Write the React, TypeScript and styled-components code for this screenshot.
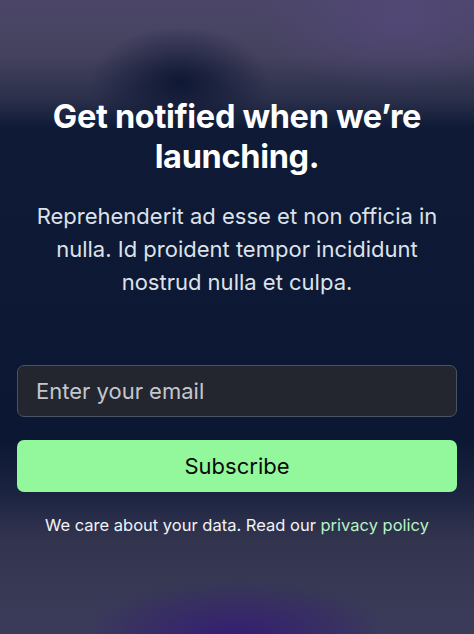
import styled, { createGlobalStyle } from "styled-components";

const GlobalStyle = createGlobalStyle`
  html, body {
    margin: 0;
    padding: 0;
    background: #0d1a35;
  }
  * {
    box-sizing: border-box;
  }
`;

const Page = styled.div`
  width: 474px;
  height: 634px;
  overflow: hidden;
  font-family: Inter, "Noto Sans", sans-serif;
  background:
    radial-gradient(ellipse 90px 55px at 180px 82px, rgba(10, 20, 48, 0.9), rgba(10, 20, 48, 0) 100%),
    radial-gradient(ellipse 140px 70px at 400px 20px, rgba(88, 74, 130, 0.6), rgba(88, 74, 130, 0) 100%),
    radial-gradient(ellipse 160px 60px at 237px 640px, rgba(52, 24, 120, 0.9), rgba(52, 24, 120, 0) 100%),
    linear-gradient(
      to bottom,
      #4b4668 0px,
      #45425f 55px,
      #2a2f4a 100px,
      #0e1a36 128px,
      #0c1833 440px,
      #1c2442 495px,
      #33354f 540px,
      #3b3c5a 634px
    );
  display: flex;
  flex-direction: column;
  align-items: center;
  padding: 97px 17px 0;
`;

const Heading = styled.h1`
  margin: 0;
  color: #ffffff;
  font-size: 32.5px;
  font-weight: 700;
  line-height: 40px;
  letter-spacing: -0.01em;
  text-align: center;
`;

const Lead = styled.p`
  margin: 23px 0 0;
  max-width: 410px;
  color: #dde2ea;
  font-size: 22px;
  line-height: 33px;
  text-align: center;
`;

const Form = styled.form`
  width: 100%;
  margin-top: 66px;
  display: flex;
  flex-direction: column;
  gap: 23px;
`;

const EmailInput = styled.input`
  width: 100%;
  height: 52px;
  padding: 0 18px;
  border: 1px solid #4c5263;
  border-radius: 7px;
  background: #23262f;
  color: #ffffff;
  font-family: inherit;
  font-size: 22px;
  outline: none;
  &::placeholder {
    color: #c4c7d0;
  }
`;

const SubscribeButton = styled.button`
  width: 100%;
  height: 52px;
  border: none;
  border-radius: 7px;
  background: #93f89c;
  color: #0a0a0a;
  font-family: inherit;
  font-size: 22px;
  cursor: pointer;
`;

const Note = styled.p`
  margin: 21px 0 0;
  color: #f1f3f7;
  font-size: 16.5px;
  line-height: 24px;
  text-align: center;
`;

const PolicyLink = styled.a`
  color: #b9f3c2;
  text-decoration: none;
`;

export default function App() {
  return (
    <>
      <GlobalStyle />
      <Page>
        <Heading>
          Get notified when we’re
          <br />
          launching.
        </Heading>
        <Lead>
          Reprehenderit ad esse et non officia in nulla. Id proident tempor incididunt nostrud nulla et
          culpa.
        </Lead>
        <Form onSubmit={(e) => e.preventDefault()}>
          <EmailInput type="email" placeholder="Enter your email" />
          <SubscribeButton type="submit">Subscribe</SubscribeButton>
        </Form>
        <Note>
          We care about your data. Read our <PolicyLink href="#">privacy policy</PolicyLink>
        </Note>
      </Page>
    </>
  );
}
